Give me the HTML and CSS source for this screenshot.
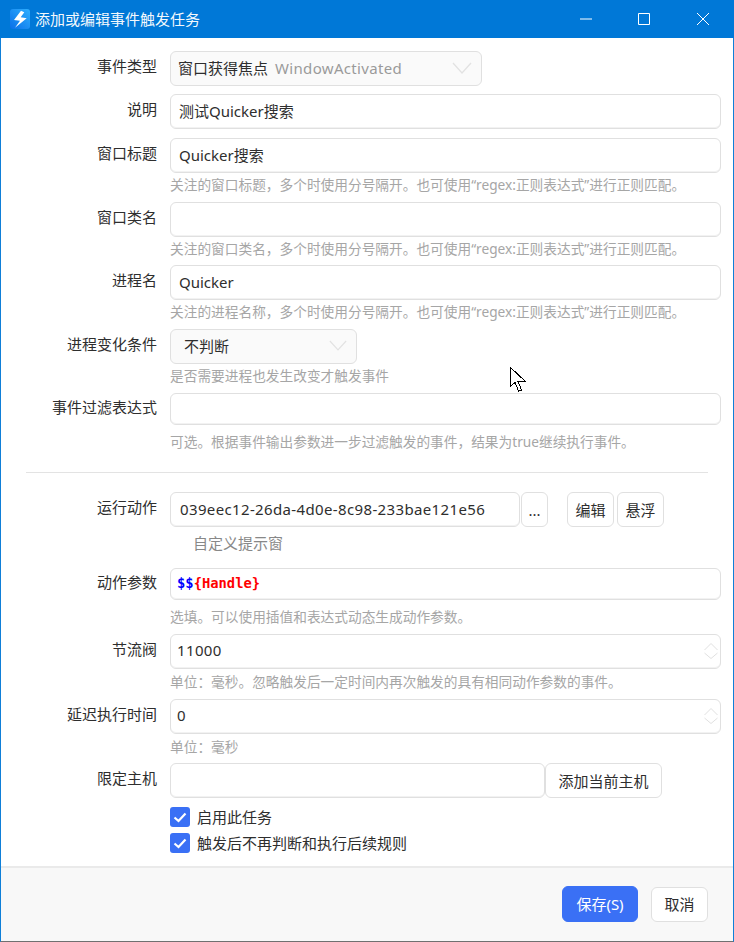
FILE: index.html
```html
<!DOCTYPE html>
<html lang="zh-CN">
<head>
<meta charset="utf-8">
<title>添加或编辑事件触发任务</title>
<link rel="stylesheet" href="styles.css">
</head>
<body>
<div class="window">
  <header class="titlebar">
    <svg class="logo" viewBox="0 0 20 20" width="20" height="20">
      <defs><linearGradient id="lg" x1="0" y1="1" x2="1" y2="0"><stop offset="0" stop-color="#0a6fe8"/><stop offset="1" stop-color="#2fb0ff"/></linearGradient></defs>
      <rect width="20" height="20" rx="3" fill="url(#lg)"/>
      <path d="M11 1.7L4 11L10 11.7L5 18.7L16.7 9.3L10.7 8.3L14.3 3.3Z" fill="#fff"/>
    </svg>
    <span class="title">添加或编辑事件触发任务</span>
    <div class="controls">
      <svg viewBox="0 0 12 12" width="12" height="12"><path d="M0 6H12" stroke="#fff" fill="none"/></svg>
      <svg viewBox="0 0 12 12" width="12" height="12"><path d="M.5 .5H11.5V11.5H.5Z" stroke="#fff" fill="none"/></svg>
      <svg class="ctl-close" viewBox="0 0 12 12" width="12" height="12"><path d="M0 0L12 12M12 0L0 12" stroke="#fff" fill="none"/></svg>
    </div>
  </header>

  <main class="form">
    <div class="row row-first">
      <label class="label">事件类型</label>
      <div class="field">
        <div class="select select-wide"><span>窗口获得焦点</span><span class="muted">WindowActivated</span>
          <svg class="chev" viewBox="0 0 20 12" width="20" height="12"><path d="M1 1L10 11L19 1" fill="none" stroke="#e2e2e2" stroke-width="1.3"/></svg>
        </div>
      </div>
    </div>
    <div class="row">
      <label class="label">说明</label>
      <div class="field"><input class="input" value="测试Quicker搜索"></div>
    </div>
    <div class="row row-hinted">
      <label class="label">窗口标题</label>
      <div class="field"><input class="input" value="Quicker搜索"><p class="hint">关注的窗口标题，多个时使用分号隔开。也可使用“regex:正则表达式”进行正则匹配。</p></div>
    </div>
    <div class="row row-hinted">
      <label class="label">窗口类名</label>
      <div class="field"><input class="input" value=""><p class="hint">关注的窗口类名，多个时使用分号隔开。也可使用“regex:正则表达式”进行正则匹配。</p></div>
    </div>
    <div class="row row-hinted">
      <label class="label">进程名</label>
      <div class="field"><input class="input" value="Quicker"><p class="hint">关注的进程名称，多个时使用分号隔开。也可使用“regex:正则表达式”进行正则匹配。</p></div>
    </div>
    <div class="row row-hinted">
      <label class="label">进程变化条件</label>
      <div class="field">
        <div class="select select-narrow"><span>不判断</span>
          <svg class="chev" viewBox="0 0 20 12" width="18" height="11"><path d="M1 1L10 11L19 1" fill="none" stroke="#e2e2e2" stroke-width="1.3"/></svg>
        </div>
        <p class="hint">是否需要进程也发生改变才触发事件</p>
      </div>
    </div>
    <div class="row row-hinted">
      <label class="label label-short">事件过滤表达式</label>
      <div class="field"><input class="input input-short" value=""><p class="hint hint-far">可选。根据事件输出参数进一步过滤触发的事件，结果为true继续执行事件。</p></div>
    </div>

    <hr class="divider">

    <div class="row row-action">
      <label class="label">运行动作</label>
      <div class="field">
        <div class="inline">
          <input class="input input-action input-wide-digits" value="039eec12-26da-4d0e-8c98-233bae121e56">
          <button class="btn btn-more">...</button>
          <button class="btn btn-edit">编辑</button>
          <button class="btn btn-float">悬浮</button>
        </div>
        <p class="action-name">自定义提示窗</p>
      </div>
    </div>
    <div class="row row-hinted">
      <label class="label label-short">动作参数</label>
      <div class="field">
        <div class="input input-short code"><span class="code-blue">$$</span><span class="code-red">{Handle}</span></div>
        <p class="hint hint-far">选填。可以使用插值和表达式动态生成动作参数。</p>
      </div>
    </div>
    <div class="row row-hinted">
      <label class="label">节流阀</label>
      <div class="field">
        <div class="spin"><input class="input input-num input-wide-digits" value="11000">
          <svg class="spin-icon" viewBox="0 0 14 18" width="14" height="18"><path d="M.5 8L7 1.5L13.5 8M.5 11L7 16.5L13.5 11" fill="none" stroke="#e0e0e0"/></svg>
        </div>
        <p class="hint hint-mid">单位：毫秒。忽略触发后一定时间内再次触发的具有相同动作参数的事件。</p>
      </div>
    </div>
    <div class="row row-hinted">
      <label class="label">延迟执行时间</label>
      <div class="field">
        <div class="spin"><input class="input input-num input-wide-digits" value="0">
          <svg class="spin-icon" viewBox="0 0 14 18" width="14" height="18"><path d="M.5 8L7 1.5L13.5 8M.5 11L7 16.5L13.5 11" fill="none" stroke="#e0e0e0"/></svg>
        </div>
        <p class="hint hint-mid">单位：毫秒</p>
      </div>
    </div>
    <div class="row row-host">
      <label class="label">限定主机</label>
      <div class="field inline">
        <input class="input input-host" value="">
        <button class="btn btn-host">添加当前主机</button>
      </div>
    </div>
    <div class="row row-check">
      <span></span>
      <div class="check"><span class="box"><svg viewBox="0 0 20 20" width="20" height="20"><path d="M4.5 10.5L8.5 14L15.5 6.5" fill="none" stroke="#fff" stroke-width="2.2"/></svg></span>启用此任务</div>
    </div>
    <div class="row row-check">
      <span></span>
      <div class="check"><span class="box"><svg viewBox="0 0 20 20" width="20" height="20"><path d="M4.5 10.5L8.5 14L15.5 6.5" fill="none" stroke="#fff" stroke-width="2.2"/></svg></span>触发后不再判断和执行后续规则</div>
    </div>
  </main>

  <footer class="footer">
    <button class="btn btn-primary">保存(S)</button>
    <button class="btn btn-cancel">取消</button>
  </footer>

  <svg class="cursor" viewBox="0 0 17 26" width="17" height="26"><path d="M.5 .5V19.5L5 15.5L8.5 24L11.5 23L8 14.5H15.5Z" fill="#fff" stroke="#000" stroke-width="1" shape-rendering="crispEdges"/></svg>
</div>
</body>
</html>
```
FILE: styles.css
```css
* { box-sizing: border-box; }
html, body { margin: 0; padding: 0; }
body {
  width: 734px;
  height: 942px;
  overflow: hidden;
  font-family: "Noto Sans", "Noto Sans CJK SC", sans-serif;
  font-size: 15px;
  color: #2e2e2e;
  background: #fff;
}
.window {
  position: relative;
  height: 942px;
  display: flex;
  flex-direction: column;
  border-left: 1px solid #0f7fd8;
  border-right: 1px solid #0f7fd8;
  border-bottom: 1px solid #707070;
}
.titlebar {
  height: 38px;
  flex: none;
  margin: 0 -1px;
  padding-left: 10px;
  display: flex;
  align-items: center;
  background: #0078d7;
  color: #fff;
}
.logo { flex: none; }
.title { margin-left: 5px; font-size: 15px; line-height: 20px; opacity: .95; }
.controls {
  margin-left: auto;
  display: flex;
  gap: 46px;
  padding-right: 25px;
}
.ctl-close { margin-left: 1px; }
.form {
  flex: 1;
  min-height: 0;
  padding-top: 13px;
  display: flex;
  flex-direction: column;
}
.row {
  display: grid;
  grid-template-columns: 156px 1fr;
  column-gap: 13px;
  margin-bottom: 9px;
}
.row-first { margin-bottom: 8px; }
.row-hinted { margin-bottom: 6.67px; }
.row-action { margin-bottom: 15px; }
.row-host { margin-bottom: 9px; }
.row-check { margin-bottom: 6px; }
.label {
  text-align: right;
  line-height: 20px;
  padding-top: 5px;
  color: #2e2e2e;
}
.label-short { padding-top: 4px; }
.field { width: 551px; min-width: 0; }
.input {
  display: block;
  width: 551px;
  height: 35px;
  padding: 0 9px 2px 8px;
  border: 1px solid #e0e0e0;
  border-radius: 6px;
  box-shadow: inset 0 -1px 0 #f2f2f2;
  background: #fff;
  font: inherit;
  color: #2e2e2e;
  outline: none;
}
.input-short { height: 32px; }
.input-action { width: 350px; padding-left: 9px; }
.input-num { padding-left: 6px; }
.input-host { width: 375px; }
.input-wide-digits { letter-spacing: .36px; }
.hint {
  margin: 2px 0 0;
  font-size: 13.7px;
  line-height: 20px;
  color: #a6a6a6;
  white-space: nowrap;
}
.hint-far { margin-top: 7px; }
.hint-mid { margin-top: 3px; }
.select {
  position: relative;
  height: 35px;
  display: flex;
  align-items: center;
  gap: 7px;
  padding-bottom: 2px;
  border: 1px solid #e0e0e0;
  border-radius: 6px;
  background: #fafafa;
}
.select-wide { width: 312px; padding-left: 7px; }
.select-narrow { width: 187px; padding-left: 13px; }
.muted { color: #9a9a9a; letter-spacing: .33px; }
.chev { position: absolute; right: 9px; top: 10px; }
.divider {
  border: 0;
  height: 1px;
  background: #e3e3e3;
  margin: 14px 25px 19px 25px;
  flex: none;
}
.inline { display: flex; align-items: flex-start; }
.btn {
  height: 35px;
  padding: 0;
  border: 1px solid #e0e0e0;
  border-radius: 6px;
  background: #fff;
  font: inherit;
  color: #2e2e2e;
}
.btn-more { width: 27px; margin-left: 1px; }
.btn-edit { width: 47px; margin-left: 19px; }
.btn-float { width: 47px; margin-left: 3px; }
.btn-host { width: 117px; }
.action-name {
  margin: 6px 0 0 23px;
  line-height: 20px;
  color: #888;
}
.code {
  display: flex;
  align-items: center;
  padding-left: 6px;
  font-family: "DejaVu Sans Mono", monospace;
  font-size: 13.8px;
  font-weight: 700;
}
.code-blue { color: #0000ff; }
.code-red { color: #ff0000; }
.spin { position: relative; }
.spin-icon { position: absolute; right: 3px; top: 8px; }
.check {
  display: flex;
  align-items: center;
  gap: 7px;
  height: 20px;
  line-height: 20px;
}
.box {
  width: 20px;
  height: 20px;
  border-radius: 3px;
  background: #3a70f5;
  flex: none;
}
.box svg { display: block; }
.footer {
  flex: none;
  height: 75px;
  border-top: 2px solid #eaeaea;
  background: #f8f8f8;
  display: flex;
  align-items: flex-start;
  padding: 18px 25px 0 0;
  justify-content: flex-end;
  gap: 13px;
}
.btn-primary {
  width: 76px;
  height: 36px;
  padding-bottom: 2px;
  background: #3a70f5;
  border-color: #3a70f5;
  color: #fff;
}
.btn-cancel { width: 57px; margin-top: 1px; padding-bottom: 2px; }
.cursor { position: absolute; left: 509px; top: 367px; }
```
